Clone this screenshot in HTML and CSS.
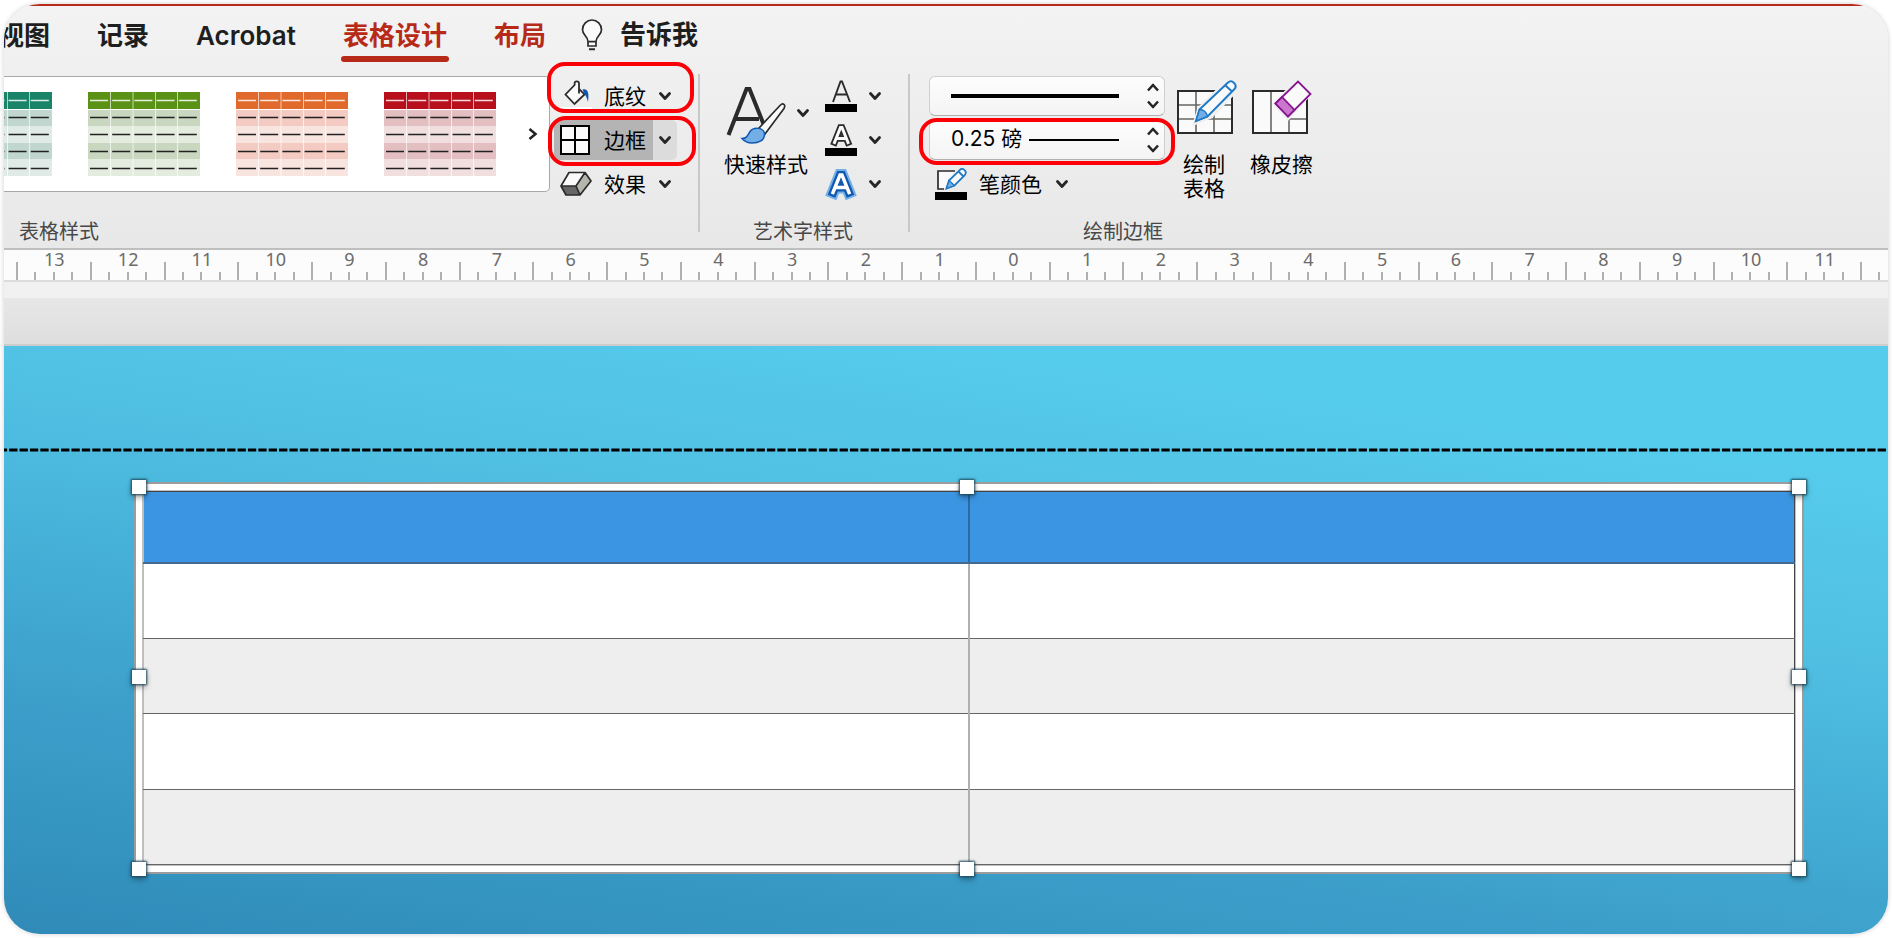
FILE: index.html
```html
<!DOCTYPE html>
<html lang="zh-CN">
<head>
<meta charset="utf-8">
<title>表格设计</title>
<link rel="stylesheet" href="styles.css">
</head>
<body>
<svg class="defs" aria-hidden="true">
  <symbol id="chev-down" viewBox="0 0 12 10"><path d="M1.500 2.500 6 7.500 10.500 2.500" fill="none" stroke="#262626" stroke-width="2.800" stroke-linecap="round" stroke-linejoin="round"/></symbol>
  <symbol id="sample" viewBox="0 0 112 84">
    <rect width="112" height="84" fill="#fff"/>
    <rect width="112" height="17" fill="currentColor"/>
    <g fill="var(--tint)">
      <rect y="18" width="112" height="16"/><rect y="34" width="112" height="17" opacity=".5"/>
      <rect y="51" width="112" height="16"/><rect y="67" width="112" height="17" opacity=".5"/>
    </g>
    <path d="M22.500 0V84M45 0V84M67.500 0V84M89.500 0V84" stroke="#fff" stroke-opacity=".65"/>
    <path d="M2 8.500H110" stroke="#fff" stroke-opacity=".85" stroke-width="1.500" stroke-dasharray="18 4.200"/>
    <path d="M2 25.500H110M2 42.500H110M2 59.500H110M2 76.500H110" stroke="#222" stroke-width="1.300" stroke-dasharray="18 4.200"/>
  </symbol>
</svg>
<main class="window">
  <nav class="tabs">
    <a class="tab tab-view" href="#">视图</a>
    <a class="tab" href="#">记录</a>
    <a class="tab" href="#">Acrobat</a>
    <a class="tab accent active" href="#">表格设计</a>
    <a class="tab accent" href="#">布局</a>
    <a class="tab tell" href="#">
      <svg width="22" height="32" viewBox="0 0 22 32"><path d="M7 22.500C7 17 1.500 16.500 1.500 10.700a9.500 9.700 0 0 1 19 0C20.500 16.500 15 17 15 22.500V27H7ZM7 22.700h8" fill="#fafafa" stroke="#2b2b2b" stroke-width="1.700"/><path d="M8 30.200h6" stroke="#2b2b2b" stroke-width="2"/></svg>
      告诉我
    </a>
  </nav>

  <section class="ribbon">
    <div class="group group-styles">
      <div class="body">
        <div class="gallery">
          <button class="thumb teal" aria-label="青色"><svg width="112" height="84"><use href="#sample"/></svg></button>
          <button class="thumb green" aria-label="绿色"><svg width="112" height="84"><use href="#sample"/></svg></button>
          <button class="thumb orange" aria-label="橙色"><svg width="112" height="84"><use href="#sample"/></svg></button>
          <button class="thumb red" aria-label="红色"><svg width="112" height="84"><use href="#sample"/></svg></button>
          <button class="more" aria-label="更多"><svg width="10" height="14" viewBox="0 0 10 14"><path d="M1.500 2 7.500 7 1.500 12" fill="none" stroke="#222" stroke-width="2.500"/></svg></button>
        </div>
        <div class="stack">
          <button class="cmd">
            <svg class="ico" width="32" height="32" viewBox="0 0 32 32"><rect y="27" width="32" height="5" fill="#fff"/><path d="M5.500 14.500 15 5V3.200a2.200 2.200 0 0 1 4.400 0V9L24.500 14.500 14.500 24.500Z" fill="#fafafa"/><path d="M19 13.500V3.500a2.200 2.200 0 0 0-4.400 0V5L5.500 14.500 14.500 24 24.500 14.500 19 8.800" fill="none" stroke="#2b2b2b" stroke-width="1.800"/><path d="M22.500 9.500c5-1.500 7 3 5.500 12.500-1-4-2-6-3.500-8Z" fill="#0f56b3"/></svg>
            <span>底纹</span><svg class="chev" width="12" height="10"><use href="#chev-down"/></svg>
          </button>
          <button class="cmd pressed">
            <svg class="ico" width="32" height="32" viewBox="0 0 32 32"><path d="M1 2H29V30H1ZM15 2V30M1 16H29" fill="#fafafa" stroke="#000" stroke-width="2"/></svg>
            <span>边框</span><svg class="chev" width="12" height="10"><use href="#chev-down"/></svg>
          </button>
          <button class="cmd">
            <svg class="ico" width="32" height="26" viewBox="0 0 32 26"><path d="M9 1.500H25L16 15H1Z" fill="#fafafa"/><path d="M1 15H16L20 24H6Z" fill="#666"/><path d="M25 1.500 31 10 20 24 16 15Z" fill="#b5b5ae"/><path d="M9 1.500H25L31 10 20 24H6L1 15ZM1 15H16L25 1.500M16 15l4 9" fill="none" stroke="#2b2b2b" stroke-width="1.700" stroke-linejoin="round"/></svg>
            <span>效果</span><svg class="chev" width="12" height="10"><use href="#chev-down"/></svg>
          </button>
          <i class="mark mark-shading"></i><i class="mark mark-border"></i>
        </div>
      </div>
      <h2 class="caption">表格样式</h2>
    </div>

    <div class="group group-wordart">
      <div class="body">
        <button class="quick">
          <span class="quick-top">
            <svg width="60" height="58" viewBox="0 0 60 58"><path d="M2.500 49 20.500 3h3L37.500 38M9 33H33" fill="none" stroke="#2b2b2b" stroke-width="4"/><path d="M33 42 54 19.500c3-3 6-1 4 3L39 48Z" fill="#fafafa" stroke="#2b2b2b" stroke-width="1.700"/><path d="M16 52.500c5 0 5.500-3 8-7 4-5.500 14-3.500 14.500 2 .5 7-6 9.500-12.500 9.500-4 0-7.500-1.500-10-4.500Z" fill="#74aee6" stroke="#1159b0" stroke-width="1.500"/></svg>
            <svg class="quick-chev" width="12" height="10"><use href="#chev-down"/></svg>
          </span>
          <span>快速样式</span>
        </button>
        <div class="stack letters">
          <button class="cmd" aria-label="文本填充"><svg width="32" height="32" viewBox="0 0 32 32"><path d="M8 22 15.500 1.500h1.500L25 22M11 14.500H22" fill="none" stroke="#2b2b2b" stroke-width="1.900"/><rect y="24" width="32" height="8"/></svg><svg class="chev" width="12" height="10"><use href="#chev-down"/></svg></button>
          <button class="cmd" aria-label="文本轮廓"><svg width="32" height="32" viewBox="0 0 32 32"><g fill="none" stroke-linecap="square"><path d="M9.500 18.500 15.500 3.500h1.500L23 18.500M12 14.500H20.500" stroke="#2b2b2b" stroke-width="6.600"/><path d="M9.500 18.500 15.500 3.500h1.500L23 18.500M12 14.500H20.500" stroke="#fafafa" stroke-width="3"/></g><rect y="24" width="32" height="8"/></svg><svg class="chev" width="12" height="10"><use href="#chev-down"/></svg></button>
          <button class="cmd" aria-label="文本效果"><svg width="32" height="32" viewBox="0 0 32 32"><g fill="none" stroke-linecap="square"><path d="M8 24.500 15 7h2L24 24.500M11.500 19.500H20.500" stroke="#74b0e8" stroke-width="12"/><path d="M8 24.500 15 7h2L24 24.500M11.500 19.500H20.500" stroke="#1159b0" stroke-width="8"/><path d="M8 24.500 15 7h2L24 24.500M11.500 19.500H20.500" stroke="#fff" stroke-width="3.400"/></g></svg><svg class="chev" width="12" height="10"><use href="#chev-down"/></svg></button>
        </div>
      </div>
      <h2 class="caption">艺术字样式</h2>
    </div>

    <div class="group group-draw">
      <div class="body">
        <div class="pens">
          <div class="picker"><select aria-label="笔样式"><option></option></select><i class="rule thick"></i><svg class="spin" width="14" height="28" viewBox="0 0 14 28"><path d="M2 8.500 7 3 12 8.500M2 19.500 7 25 12 19.500" fill="none" stroke="#262626" stroke-width="2.600" stroke-linejoin="round"/></svg></div>
          <div class="picker"><select aria-label="笔划粗细"><option>0.25 磅</option></select><i class="rule thin"></i><svg class="spin" width="14" height="28" viewBox="0 0 14 28"><path d="M2 8.500 7 3 12 8.500M2 19.500 7 25 12 19.500" fill="none" stroke="#262626" stroke-width="2.600" stroke-linejoin="round"/></svg><i class="mark mark-weight"></i></div>
          <button class="cmd pen">
            <svg width="32" height="32" viewBox="0 0 32 32"><rect y="24" width="32" height="8"/><path d="M20 3H3V21H9" fill="#fafafa" stroke="#2b2b2b" stroke-width="1.700"/><path d="M11.500 20.500 14 12.500 25 1.800c3-2.500 7.500 1.500 5 5L19.500 17.500ZM23.500 3.500l5.500 5.500" fill="#fafafa" stroke="#1f7ac8" stroke-width="1.800"/><path d="M11.500 20.500 14 12.500l5.500 5Z" fill="#74aee6" stroke="#1f7ac8" stroke-width="1.300"/></svg>
            <span>笔颜色</span><svg class="chev" width="12" height="10"><use href="#chev-down"/></svg>
          </button>
        </div>
        <button class="tool draw">
          <svg width="60" height="56" viewBox="0 0 60 56"><path d="M1 11H55V53H1Z" fill="#fafafa"/><path d="M1 25H55M1 39H55M19 11V53M37 11V53" stroke="#666660" stroke-width="1.600"/><path d="M1 11H55V53H1Z" fill="none" stroke="#2b2b2b" stroke-width="2"/><path d="M17 44 22 28 50 1 60 1 60 10 34 37Z" fill="#f0f0f0" stroke="#f0f0f0" stroke-width="3"/><path d="M19 41 22.500 29.500 51 2.500c4-3.500 10 2.500 6.500 6.500L30.500 36.500ZM48 5l7.500 7" fill="#fafafa" stroke="#1f7ac8" stroke-width="2"/><path d="M19 41 22.500 29.500c4 0 7 3 8 7Z" fill="#74aee6" stroke="#1f7ac8" stroke-width="1.500"/></svg>
          <span>绘制<br>表格</span>
        </button>
        <button class="tool erase">
          <svg width="60" height="56" viewBox="0 0 60 56"><path d="M1 11H55V53H1Z" fill="#fafafa"/><path d="M19 11V53M37 39V53M37 39H55" stroke="#666660" stroke-width="1.600"/><path d="M1 11H55V53H1Z" fill="none" stroke="#2b2b2b" stroke-width="2"/><path d="M20 24 44-1 61 13 36 41Z" fill="#f0f0f0"/><path d="M23.500 23.500 46 1.500 58.500 14 36 36.500Z" fill="#fafafa" stroke="#85168f" stroke-width="1.800"/><path d="M23.500 23.500 30 17 42.500 30 36 36.500Z" fill="#cb77cf" stroke="#85168f" stroke-width="1.800"/></svg>
          <span>橡皮擦</span>
        </button>
      </div>
      <h2 class="caption">绘制边框</h2>
    </div>
  </section>

  <div class="ruler" id="ruler"></div>
  <div class="gutter"></div>
  <div class="canvas-edge"></div>

  <section class="slide">
    <svg class="guide" height="4"><line x1="0" y1="2" x2="100%" y2="2" pathLength="1815"/></svg>
    <div class="frame">
      <table class="grid">
        <tbody>
          <tr class="head"><td></td><td></td></tr>
          <tr><td></td><td></td></tr>
          <tr class="band"><td></td><td></td></tr>
          <tr><td></td><td></td></tr>
          <tr class="band"><td></td><td></td></tr>
        </tbody>
      </table>
      <i class="handle n w"></i><i class="handle n c"></i><i class="handle n e"></i>
      <i class="handle m w"></i><i class="handle m e"></i>
      <i class="handle s w"></i><i class="handle s c"></i><i class="handle s e"></i>
    </div>
  </section>
</main>
<script src="ruler.js"></script>
</body>
</html>
```
FILE: ruler.js
```js
const ruler = document.getElementById('ruler');
for (let n = -13; n <= 11; n++) {
  const unit = document.createElement('div');
  unit.className = 'unit';
  unit.innerHTML = `<span>${Math.abs(n)}</span><i></i><i></i><i></i><i></i>`;
  ruler.append(unit);
}
const rest = document.createElement('div');
rest.className = 'unit rest';
rest.innerHTML = '<i></i><i></i>';
ruler.append(rest);
```
FILE: styles.css
```css
* { box-sizing: border-box; }
body {
  margin: 0;
  padding: 4px;
  background: #fff;
  font-family: Inter, "Noto Sans CJK SC", sans-serif;
  font-size: 21px;
  color: #000;
}
button {
  font: inherit;
  color: inherit;
  background: none;
  border: 0;
  padding: 0;
}
i { display: block; }
svg { display: block; flex: none; }
.defs { position: absolute; width: 0; height: 0; }

.window {
  display: flex;
  flex-direction: column;
  min-height: calc(100vh - 8px);
  border-radius: 36px;
  overflow: hidden;
  background: linear-gradient(#f3f3f3, #f0f0f0 60px, #e8e8e8 244px);
  box-shadow: 0 0 5px rgba(0, 0, 0, .2);
}

/* tab strip */
.tabs {
  display: flex;
  gap: 47px;
  height: 70px;
  border-top: 2px solid #b72a18;
  white-space: nowrap;
}
.tab {
  position: relative;
  height: 58px;
  line-height: 60px;
  font-size: 26px;
  font-weight: 600;
  color: #1e1e1e;
  text-decoration: none;
}
.tab-view { margin-left: -6px; }
.accent { color: #b72a18; }
.active::after {
  content: "";
  position: absolute;
  left: -2px;
  right: -2px;
  bottom: 2px;
  height: 6px;
  border-radius: 3px;
  background: #b72a18;
}
.tell { display: flex; align-items: center; gap: 17px; margin-left: -12px; }

/* ribbon */
.ribbon { display: flex; height: 174px; }
.group { display: flex; flex-direction: column; position: relative; }
.group + .group::before {
  content: "";
  position: absolute;
  left: -2px;
  top: 0;
  width: 2px;
  height: 158px;
  background: #c8c8c8;
}
.body { display: flex; height: 142px; }
.caption {
  margin: 0;
  font-size: 20px;
  line-height: 32px;
  font-weight: 400;
  color: #484848;
  text-align: center;
}
.group-styles { width: 696px; }
.group-styles .caption { text-align: left; padding-left: 15px; }
.group-wordart { width: 210px; }
.group-wordart .caption { padding-right: 4px; }
.group-draw { width: 426px; }

.gallery {
  display: flex;
  align-items: center;
  gap: 36px;
  width: 546px;
  height: 116px;
  margin-top: 2px;
  border: 1px solid #a8a8a8;
  border-left: 0;
  border-radius: 0 5px 5px 0;
  background: #fff;
  overflow: hidden;
}
.thumb { flex: none; }
.teal { color: #1a8468; --tint: #c1d6cf; margin-left: -64px; }
.green { color: #5a9216; --tint: #cad7c0; }
.orange { color: #e0692b; --tint: #f3cbc2; }
.red { color: #b80f1c; --tint: #e3bfc1; }
.more { margin-left: -4px; }

.stack {
  position: relative;
  display: flex;
  flex-direction: column;
  gap: 4px;
  padding-top: 2px;
}
.cmd {
  display: flex;
  align-items: center;
  height: 40px;
  line-height: 40px;
  white-space: nowrap;
}
.cmd span { padding-top: 1px; }
.group-styles .stack { margin-left: 4px; }
.group-styles .cmd { width: 123px; padding-left: 6px; border-radius: 5px; }
.ico { margin-right: 12px; }
.group-styles .chev { margin-left: 13px; }
.pressed { background: linear-gradient(90deg, #b4b4b4 99px, #dcdcdc 99px); }

.mark {
  position: absolute;
  border: 4px solid #fb0007;
  border-radius: 18px;
  pointer-events: none;
}
.mark-shading { left: -7px; top: -12px; width: 147px; height: 51px; }
.mark-border { left: -6px; top: 42px; width: 148px; height: 50px; }
.mark-weight { left: -10px; top: -2px; width: 256px; height: 47px; }

.quick {
  display: flex;
  flex-direction: column;
  align-items: center;
  align-self: flex-start;
  width: 84px;
  margin: 10px 0 0 24px;
  line-height: 30px;
  white-space: nowrap;
}
.quick-top { display: flex; align-items: flex-start; gap: 11px; height: 66px; padding: 2px 0 0 2px; }
.quick-chev { margin-top: 22px; }
.letters { margin-left: 17px; }
.letters .chev { margin-left: 12px; }

.pens {
  display: flex;
  flex-direction: column;
  gap: 4px;
  width: 236px;
  margin-left: 19px;
  padding-top: 2px;
}
.picker { position: relative; height: 40px; }
.picker select {
  appearance: none;
  width: 100%;
  height: 100%;
  padding: 0 21px 4px;
  border: 1px solid #cfcfcf;
  border-bottom-color: #b0b0b0;
  border-radius: 6px;
  background: linear-gradient(#fdfdfd, #f4f4f4);
  font: inherit;
  color: #000;
}
.rule { position: absolute; right: 46px; background: #000; }
.thick { left: 22px; top: 18px; height: 4px; }
.thin { left: 100px; top: 19px; height: 2px; }
.spin { position: absolute; right: 5px; top: 6px; }
.pen { padding-left: 6px; }
.pen span { margin: 0 14px 0 12px; }

.tool {
  display: flex;
  flex-direction: column;
  align-items: center;
  align-self: flex-start;
  gap: 17px;
  padding-top: 6px;
  line-height: 24px;
  white-space: nowrap;
}
.draw { margin-left: 12px; }
.draw span { padding-right: 6px; }
.erase { margin-left: 13px; }

/* ruler */
.ruler {
  display: flex;
  height: 34px;
  padding-left: 12px;
  border-top: 2px solid #bfbfbf;
  border-bottom: 2px solid #dcdcdc;
  background: #fcfcfc;
}
.unit {
  position: relative;
  flex: 1;
  display: grid;
  grid-template-columns: repeat(4, 1fr);
  align-items: end;
}
.unit i { width: 2px; height: 8px; background: #b0b0b0; }
.unit i:first-of-type { height: 18px; }
.unit span {
  position: absolute;
  left: 0;
  right: 0;
  top: 0;
  padding-left: 3px;
  text-align: center;
  font: 18px/18px "Noto Sans", sans-serif;
  color: #6b6b6b;
}
.rest { flex: 0 0 28px; grid-template-columns: 18px 10px; }
.gutter { height: 16px; background: #f1f1f1; }
.canvas-edge {
  height: 48px;
  border-bottom: 2px solid #cdcdcd;
  background: linear-gradient(#e7e7e7, #dedede);
}

/* slide */
.slide {
  flex: 1;
  display: flex;
  flex-direction: column;
  padding: 102px 84px 60px 130px;
  background: linear-gradient(188deg, #56ccec 15%, #50bfe2 37%, #43acd4 58%, #3c9fca 72%, #3594c0 88%, #308ab8);
}
.guide { align-self: stretch; width: calc(100% + 214px); margin: 0 -84px 30px -130px; }
.guide line { stroke: #000; stroke-width: 3px; stroke-dasharray: 8 2; stroke-dashoffset: 5; }
.frame {
  position: relative;
  flex: 1;
  display: flex;
  border: 2px solid #9c9c9c;
  padding: 7px;
  background: #fff;
}
.grid {
  flex: 1;
  border-collapse: collapse;
  table-layout: fixed;
  border: 1px solid #444;
  border-left-color: #bdbdbd;
  outline: 1px solid #c0c0c0;
}
.grid td { height: 75px; padding: 0; border-bottom: 1px solid #666; }
.grid td + td { border-left: 2px solid #b0b0b0; }
.grid .head td { height: 71px; background: #3c95e2; border-bottom: 2px solid #44698e; }
.grid .head td + td { border-left-color: #2b6ba4; }
.band { background: #eee; }
.handle {
  position: absolute;
  width: 14px;
  height: 14px;
  background: #fff;
  box-shadow: 0 0 2px 1px #1c4a5c, 0 3px 6px rgba(0, 0, 0, .4);
}
.n { top: -4px; }
.m { top: calc(50% - 8px); }
.s { bottom: -4px; }
.w { left: -4px; }
.c { left: calc(50% - 9px); }
.e { right: -4px; }
```
